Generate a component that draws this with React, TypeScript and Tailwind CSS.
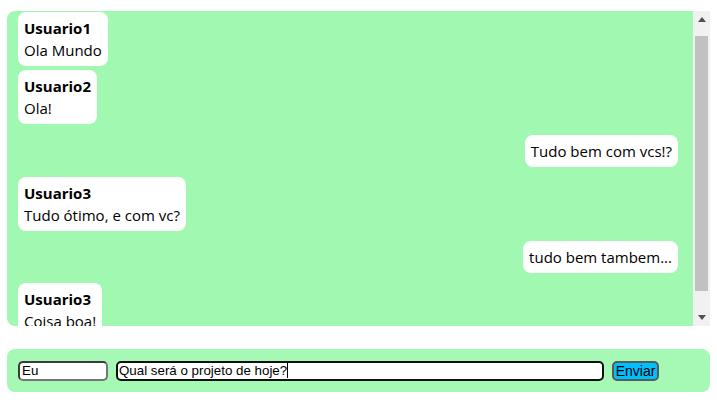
const messages = [
  { user: "Usuario1", text: "Ola Mundo", mine: false, mt: "mt-[1px]" },
  { user: "Usuario2", text: "Ola!", mine: false, mt: "mt-[4px]" },
  { user: "", text: "Tudo bem com vcs!?", mine: true, mt: "mt-[11px]" },
  { user: "Usuario3", text: "Tudo ótimo, e com vc?", mine: false, mt: "mt-[10px]" },
  { user: "", text: "tudo bem tambem...", mine: true, mt: "mt-[10px]" },
  { user: "Usuario3", text: "Coisa boa!", mine: false, mt: "mt-[10px]" },
];

function Scrollbar() {
  return (
    <div className="w-[17px] h-full shrink-0 bg-[#f1f1f1] flex flex-col">
      <div className="h-[17px] flex items-center justify-center">
        <svg width="8" height="5" viewBox="0 0 8 5">
          <path d="M4 0 L8 5 L0 5 Z" fill="#505050" />
        </svg>
      </div>
      <div className="flex-1 px-[2px] pt-[8px] pb-[18px]">
        <div className="h-full bg-[#c1c1c1]" />
      </div>
      <div className="h-[17px] flex items-center justify-center">
        <svg width="8" height="5" viewBox="0 0 8 5">
          <path d="M0 0 L8 0 L4 5 Z" fill="#505050" />
        </svg>
      </div>
    </div>
  );
}

export default function App() {
  return (
    <div className="w-[717px] h-[404px] bg-white pl-[7px] pt-[11px] font-['Open_Sans',sans-serif]">
      <div className="w-[703px] h-[315px] rounded-l-lg bg-[#a1f9b1] flex overflow-hidden">
        <div className="flex-1 overflow-hidden">
          <div className="flex flex-col pl-[11px] pr-[15px] pb-[11px]">
            {messages.map((m, i) => (
              <div
                key={i}
                className={`${m.mt} ${m.mine ? "self-end" : "self-start"} bg-white rounded-lg px-[6px] py-[5px] text-[15px] leading-[22px] text-black`}
              >
                {m.user && <div className="font-bold">{m.user}</div>}
                <div>{m.text}</div>
              </div>
            ))}
          </div>
        </div>
        <Scrollbar />
      </div>

      <form className="mt-[23px] w-[703px] h-[43px] rounded-lg bg-[#a6f9b5] flex items-center pl-[11px] gap-[8px] font-['Liberation_Sans',sans-serif] text-[13.33px]">
        <input
          defaultValue="Eu"
          className="w-[90px] h-[20px] bg-white rounded-[5px] border-2 border-t-[#3b3b3b] border-l-[#3b3b3b] border-b-[#767676] border-r-[#767676] pl-[2px] outline-none"
        />
        <div className="w-[488px] h-[20px] bg-white rounded-[5px] border-2 border-[#101010] pl-[1px] flex items-center">
          <span>Qual será o projeto de hoje?</span>
          <span className="w-px h-[15px] bg-black" />
        </div>
        <button
          type="button"
          className="w-[47px] h-[20px] bg-[#00bfff] rounded-[5px] border-2 border-[#5a5a5a] text-black leading-none px-0 text-[14px]"
        >
          Enviar
        </button>
      </form>
    </div>
  );
}
